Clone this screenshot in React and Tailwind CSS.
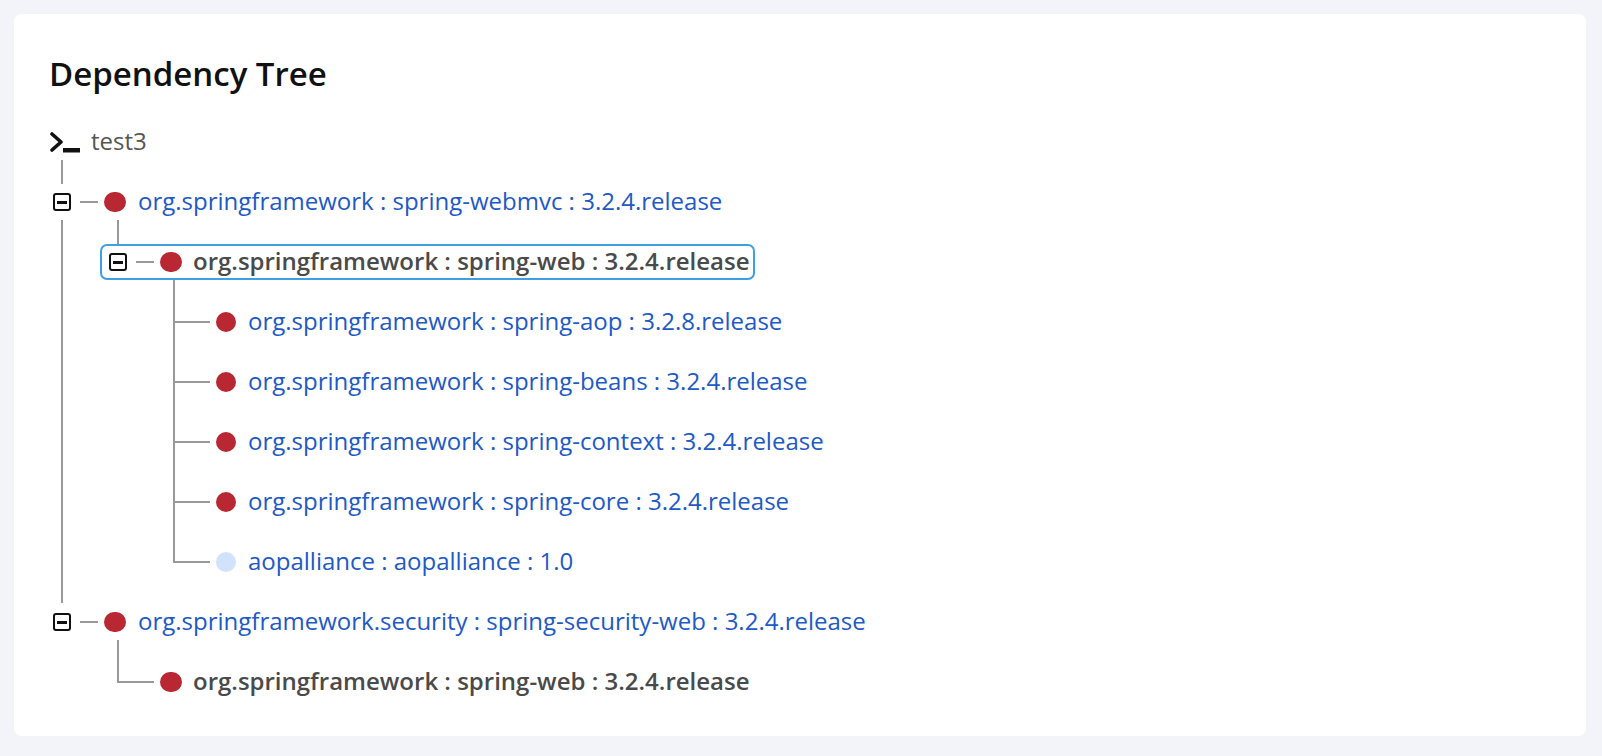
const font = { fontFamily: '"Open Sans", sans-serif' };

function Toggle() {
  return (
    <span className="flex items-center justify-center w-[18px] h-[18px] shrink-0 border-2 border-[#111] rounded-[3px] bg-white">
      <span className="block w-[10px] h-[3px] bg-[#111]" />
    </span>
  );
}

function Dash({ className }) {
  return <span className={"block h-[2px] bg-[#999] shrink-0 " + className} />;
}

function Dot({ className }) {
  return <span className={"block h-[20px] rounded-full shrink-0 " + className} />;
}

function Label({ bold, children }) {
  return bold ? (
    <span className="ml-[11px] font-semibold text-[#4a4a4a] whitespace-nowrap leading-[32px] mt-[-2px]">{children}</span>
  ) : (
    <span className="ml-[12px] text-[#2159c5] whitespace-nowrap leading-[32px] mt-[-2px]">{children}</span>
  );
}

function Leaf({ name, light }) {
  return (
    <div className="h-[60px] flex items-center">
      <Dash className="w-[37px] mr-[6px]" />
      <Dot className={"w-[20px] " + (light ? "bg-[#d2e2fb]" : "bg-[#b92733]")} />
      <span className="ml-[12px] text-[#2159c5] whitespace-nowrap leading-[32px] mt-[-2px]">{name}</span>
    </div>
  );
}

export default function App() {
  return (
    <div style={font} className="bg-[#f3f4f9] h-[756px] pt-[14px] pl-[14px] pr-[16px] pb-[20px] text-[24px]">
      <div className="bg-white rounded-[8px] h-[722px] pl-[36px] pt-[34px]">
        <h1 className="text-[33px] leading-[52px] font-semibold text-[#111] m-0 ml-[-1px]">Dependency Tree</h1>

        <div className="h-[60px] mt-[12px] flex items-center">
          <svg width="30" height="22" viewBox="0 0 30 22" className="shrink-0">
            <path d="M2 3 L11 11 L2 19" fill="none" stroke="#111" strokeWidth="3.6" strokeLinecap="round" strokeLinejoin="round" />
            <rect x="13" y="17" width="17" height="4.5" fill="#111" />
          </svg>
          <span className="ml-[11px] text-[#555] leading-[32px] mt-[-3px]">test3</span>
        </div>

        <div className="relative">
          {/* root trunk */}
          <span className="absolute left-[11px] top-[-12px] w-[2px] h-[24px] bg-[#999]" />
          <span className="absolute left-[11px] top-[48px] w-[2px] h-[383px] bg-[#999]" />

          <div className="h-[60px] flex items-center pl-[3px]">
            <Toggle />
            <Dash className="w-[18px] ml-[9px] mr-[6px]" />
            <Dot className="w-[22px] bg-[#b92733]" />
            <Label>org.springframework : spring-webmvc : 3.2.4.release</Label>
          </div>

          <div className="relative pl-[50px]">
            <span className="absolute left-[67px] top-[-12px] w-[2px] h-[24px] bg-[#999]" />
            <div className="h-[60px] flex items-center">
              <div className="h-[36px] flex items-center pl-[7px] pr-[3px] border-2 border-[#3e9fe3] rounded-[7px]">
                <Toggle />
                <Dash className="w-[18px] ml-[9px] mr-[6px]" />
                <Dot className="w-[22px] bg-[#b92733]" />
                <Label bold>org.springframework : spring-web : 3.2.4.release</Label>
              </div>
            </div>

            <div className="relative pl-[73px]">
              <span className="absolute left-[73px] top-[-12px] w-[2px] h-[283px] bg-[#999]" />
              <Leaf name="org.springframework : spring-aop : 3.2.8.release" />
              <Leaf name="org.springframework : spring-beans : 3.2.4.release" />
              <Leaf name="org.springframework : spring-context : 3.2.4.release" />
              <Leaf name="org.springframework : spring-core : 3.2.4.release" />
              <Leaf name="aopalliance : aopalliance : 1.0" light />
            </div>
          </div>

          <div className="h-[60px] flex items-center pl-[3px]">
            <Toggle />
            <Dash className="w-[18px] ml-[9px] mr-[6px]" />
            <Dot className="w-[22px] bg-[#b92733]" />
            <Label>org.springframework.security : spring-security-web : 3.2.4.release</Label>
          </div>

          <div className="relative pl-[67px]">
            <span className="absolute left-[67px] top-[-12px] w-[2px] h-[43px] bg-[#999]" />
            <div className="h-[60px] flex items-center">
              <Dash className="w-[37px] mr-[6px]" />
              <Dot className="w-[22px] bg-[#b92733]" />
              <Label bold>org.springframework : spring-web : 3.2.4.release</Label>
            </div>
          </div>
        </div>
      </div>
    </div>
  );
}
